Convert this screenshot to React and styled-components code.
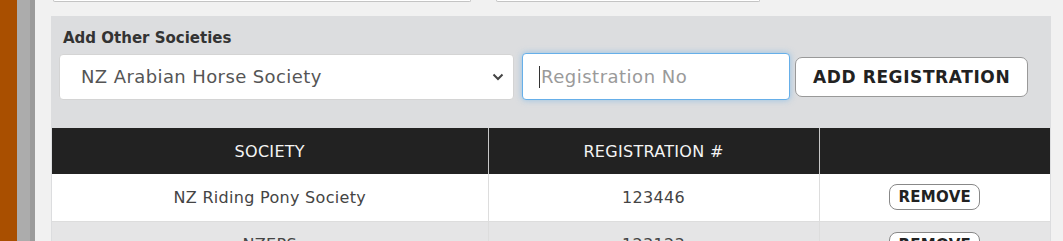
import React from 'react'
import styled, { createGlobalStyle } from 'styled-components'

const GlobalStyle = createGlobalStyle`
  html, body {
    margin: 0;
    padding: 0;
    background: #f1f1f1;
  }
  * { box-sizing: border-box; }
`

const font = `"DejaVu Sans", "Open Sans", sans-serif`

const Page = styled.div`
  display: flex;
  height: 241px;
  overflow: hidden;
  font-family: ${font};
`

const Strip = styled.div`
  width: ${({ w }) => w}px;
  background: ${({ color }) => color};
  flex-shrink: 0;
`

const Main = styled.div`
  flex: 1;
  background: #f1f1f1;
  padding: 0 13px 0 16px;
`

const PrevRow = styled.div`
  display: flex;
  gap: 25px;
  height: 16px;
  padding-left: 2px;
`

const PrevField = styled.div`
  width: ${({ w }) => w}px;
  height: 2px;
  background: #fff;
  border: 1px solid #c4c4c4;
  border-top: none;
  border-radius: 0 0 3px 3px;
`

const Panel = styled.div`
  background: #dcdddf;
  padding: 12px 1px 0 1px;
  height: 225px;
`

const Label = styled.div`
  font-size: 15px;
  font-weight: 700;
  color: #333;
  margin: 0 0 5px 11px;
  line-height: 20px;
`

const FormRow = styled.div`
  display: flex;
  align-items: center;
  gap: 8px;
  padding-left: 7px;
`

const SelectBox = styled.div`
  position: relative;
  width: 455px;
  height: 46px;
  background: #fff;
  border: 1px solid #d4d4d4;
  border-radius: 4px;
  display: flex;
  align-items: center;
  padding-left: 21px;
  font-size: 18px;
  letter-spacing: 0.4px;
  color: #555;
`

const Chevron = styled.svg`
  position: absolute;
  right: 9px;
  top: 18px;
`

const Input = styled.div`
  width: 268px;
  height: 47px;
  background: #fff;
  border: 1px solid #66afe9;
  border-radius: 4px;
  box-shadow: 0 0 6px rgba(102, 175, 233, 0.6);
  display: flex;
  align-items: center;
  padding-left: 16px;
  font-size: 18px;
  letter-spacing: 0.5px;
  color: #9a9a9a;
`

const Caret = styled.span`
  display: inline-block;
  width: 1px;
  height: 22px;
  background: #333;
  margin-right: 1px;
`

const Button = styled.button`
  height: 40px;
  padding: 0 17px;
  background: #fff;
  border: 1px solid #999;
  border-radius: 7px;
  font-family: ${font};
  font-size: 17px;
  letter-spacing: 0.6px;
  font-weight: 700;
  color: #222;
  margin-left: -3px;
`

const Table = styled.table`
  margin-top: 28px;
  width: 998px;
  border-collapse: collapse;
  font-size: 16px;
  letter-spacing: 0.3px;
`

const Th = styled.th`
  background: #222;
  color: #f4f4f4;
  font-weight: 400;
  height: 46px;
  padding: 0;
  width: ${({ w }) => w}px;
  border-left: 1px solid #c8c8c8;
  &:first-child { border-left: none; }
`

const Tr = styled.tr`
  background: ${({ alt }) => (alt ? '#e5e5e6' : '#fff')};
`

const Td = styled.td`
  text-align: center;
  color: #444;
  height: 47px;
  padding: 0;
  border-left: 1px solid #ddd;
  border-bottom: 1px solid #ddd;
  &:first-child { border-left: none; }
`

const RemoveButton = styled.button`
  font-family: ${font};
  font-size: 15px;
  letter-spacing: 0.3px;
  font-weight: 700;
  color: #222;
  background: #fff;
  border: 1px solid #888;
  border-radius: 8px;
  padding: 3px 8px;
`

const rows = [
  { society: 'NZ Riding Pony Society', reg: '123446' },
  { society: 'NZEPS', reg: '123123' },
]

const App = () => {
  return (
    <>
      <GlobalStyle />
      <Page>
        <Strip w={17} color="#a94f00" />
        <Strip w={13} color="#acacac" />
        <Strip w={5} color="#9b9b9b" />
        <Main>
          <PrevRow>
            <PrevField w={418} />
            <PrevField w={264} />
          </PrevRow>
          <Panel>
            <Label>Add Other Societies</Label>
            <FormRow>
              <SelectBox>
                NZ Arabian Horse Society
                <Chevron width="12" height="8" viewBox="0 0 12 8">
                  <path d="M1.5 1.5 L6 6 L10.5 1.5" fill="none" stroke="#444" strokeWidth="2" />
                </Chevron>
              </SelectBox>
              <Input>
                <Caret />
                Registration No
              </Input>
              <Button>ADD REGISTRATION</Button>
            </FormRow>
            <Table>
              <thead>
                <tr>
                  <Th w={436}>SOCIETY</Th>
                  <Th w={331}>REGISTRATION #</Th>
                  <Th w={231}></Th>
                </tr>
              </thead>
              <tbody>
                {rows.map((r, i) => (
                  <Tr key={i} alt={i % 2 === 1}>
                    <Td>{r.society}</Td>
                    <Td>{r.reg}</Td>
                    <Td><RemoveButton>REMOVE</RemoveButton></Td>
                  </Tr>
                ))}
              </tbody>
            </Table>
          </Panel>
        </Main>
      </Page>
    </>
  )
}

export default App
